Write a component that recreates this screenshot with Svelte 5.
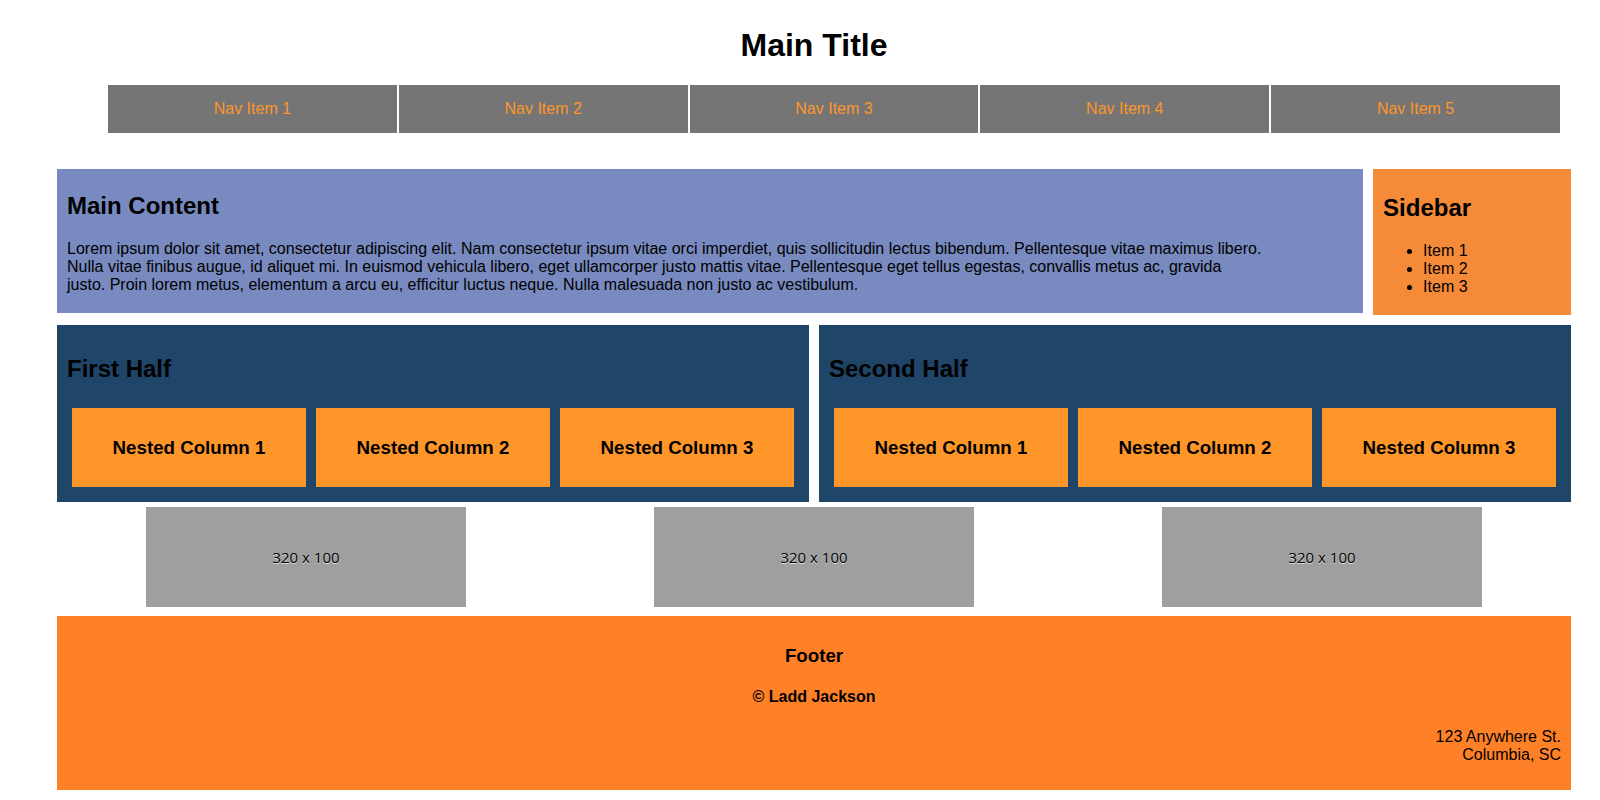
<script>
  const navItems = ['Nav Item 1', 'Nav Item 2', 'Nav Item 3', 'Nav Item 4', 'Nav Item 5'];
  const sideItems = ['Item 1', 'Item 2', 'Item 3'];
  const halves = ['First Half', 'Second Half'];
  const nested = ['Nested Column 1', 'Nested Column 2', 'Nested Column 3'];
  const images = [1, 2, 3];
</script>

<div class="page">
  <header>
    <h1>Main Title</h1>
    <nav>
      <ul class="nav">
        {#each navItems as item}
          <li><a href="#top">{item}</a></li>
        {/each}
      </ul>
    </nav>
  </header>

  <div class="top-row">
    <main>
      <h2>Main Content</h2>
      <p>
        Lorem ipsum dolor sit amet, consectetur adipiscing elit. Nam consectetur ipsum vitae orci imperdiet, quis sollicitudin lectus bibendum. Pellentesque vitae maximus libero.<br />
        Nulla vitae finibus augue, id aliquet mi. In euismod vehicula libero, eget ullamcorper justo mattis vitae. Pellentesque eget tellus egestas, convallis metus ac, gravida<br />
        justo. Proin lorem metus, elementum a arcu eu, efficitur luctus neque. Nulla malesuada non justo ac vestibulum.
      </p>
    </main>
    <aside>
      <h2>Sidebar</h2>
      <ul>
        {#each sideItems as item}
          <li>{item}</li>
        {/each}
      </ul>
    </aside>
  </div>

  <div class="halves">
    {#each halves as half}
      <section class="half">
        <h2>{half}</h2>
        <div class="nested">
          {#each nested as column}
            <div class="column"><h3>{column}</h3></div>
          {/each}
        </div>
      </section>
    {/each}
  </div>

  <div class="images">
    {#each images as image (image)}
      <div class="placeholder">320 x 100</div>
    {/each}
  </div>

  <footer>
    <h3>Footer</h3>
    <h4>© Ladd Jackson</h4>
    <address>123 Anywhere St.<br />Columbia, SC</address>
  </footer>
</div>

<style>
  :global(body) {
    background: #fff;
  }

  .page {
    margin: 0 29px 0 57px;
    padding: 27px 0 10px;
    color: #000;
    font-family: "Liberation Sans", Arial, sans-serif;
    font-size: 16px;
    line-height: 18px;
  }

  h1,
  h2,
  h3,
  h4,
  p,
  ul {
    margin: 0;
  }

  h1 {
    font-size: 32px;
    line-height: 37px;
    text-align: center;
  }

  h2 {
    font-size: 24px;
    line-height: 27px;
  }

  h3 {
    line-height: 22px;
    text-align: center;
  }

  h4 {
    text-align: center;
  }

  .nav {
    display: grid;
    grid-template-columns: repeat(5, minmax(0, 1fr));
    gap: 2px;
    margin: 21px 11px 36px 51px;
    padding: 0;
    list-style: none;
  }

  .nav a {
    display: block;
    padding: 15px 0;
    background: #757575;
    color: #ff962a;
    text-align: center;
    text-decoration: none;
  }

  .top-row {
    display: grid;
    grid-template-columns: 33fr 5fr;
    align-items: start;
    gap: 10px;
    margin-bottom: 10px;
  }

  main {
    padding: 23px 10px 19px;
    background: #788abf;
  }

  main h2,
  aside h2 {
    margin-bottom: 21px;
  }

  aside {
    padding: 25px 10px 19px;
    background: #f58a39;
  }

  aside ul {
    padding-left: 40px;
  }

  .halves {
    display: grid;
    grid-template-columns: repeat(2, minmax(0, 1fr));
    gap: 10px;
    margin-bottom: 5px;
  }

  .half {
    padding: 30px 10px 15px;
    background: #1f4568;
  }

  .nested {
    display: grid;
    grid-template-columns: repeat(3, minmax(0, 1fr));
    gap: 10px;
    margin: 26px 5px 0;
  }

  .column {
    padding: 29px 0 28px;
    background: #ff962a;
  }

  .images {
    display: grid;
    grid-template-columns: repeat(3, minmax(0, 1fr));
    justify-items: center;
    gap: 10px;
    margin-bottom: 9px;
  }

  .placeholder {
    width: 320px;
    max-width: 100%;
    background: #9f9f9f;
    font-family: "Open Sans", sans-serif;
    font-size: 15px;
    font-weight: 400;
    line-height: 100px;
    text-align: center;
    text-shadow: 0 1px 0 #ddd;
  }

  footer {
    padding: 29px 10px 26px;
    background: #ff8127;
  }

  footer h4 {
    margin: 21px 0 22px;
  }

  address {
    font-style: normal;
    text-align: right;
  }
</style>
